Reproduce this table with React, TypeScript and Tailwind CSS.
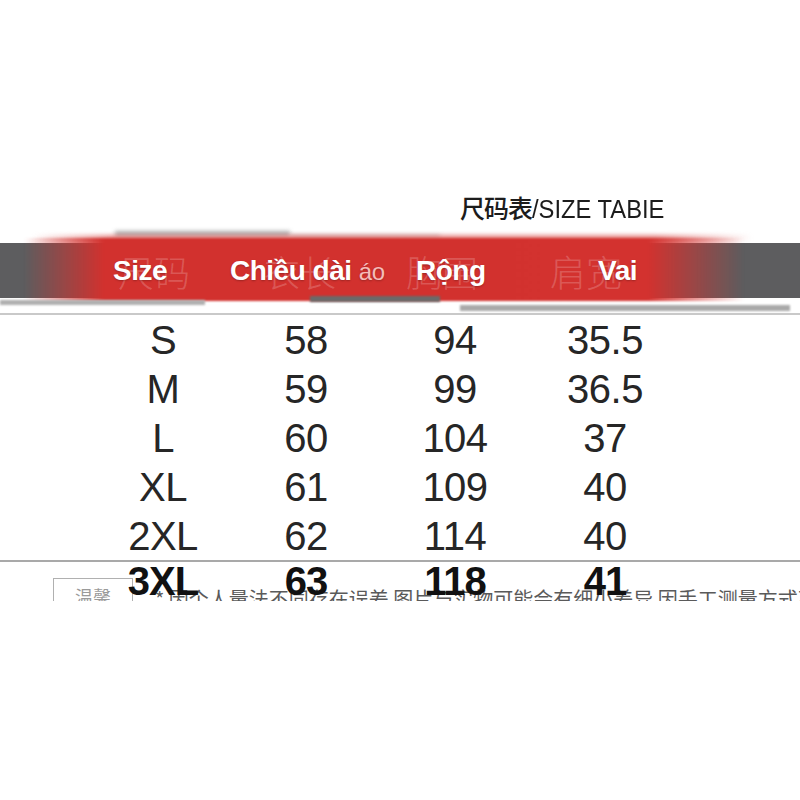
// Size chart — product size table with red brush header band

const ROWS = [
  { size: "S", len: "58", chest: "94", shoulder: "35.5" },
  { size: "M", len: "59", chest: "99", shoulder: "36.5" },
  { size: "L", len: "60", chest: "104", shoulder: "37" },
  { size: "XL", len: "61", chest: "109", shoulder: "40" },
  { size: "2XL", len: "62", chest: "114", shoulder: "40" },
];

const LAST = { size: "3XL", len: "63", chest: "118", shoulder: "41" };

const SANS = "font-['Liberation_Sans','Noto_Sans_CJK_SC',sans-serif]";
const CJK = "font-['Noto_Sans_CJK_SC','Liberation_Sans',sans-serif]";

export default function App() {
  return (
    <div className={`w-[800px] h-[800px] bg-white overflow-hidden ${SANS}`}>
      {/* Title */}
      <div className="pt-[191px] pl-[460px] h-[228px]">
        <p className="text-[25px] leading-[32px] text-[#1c1c1c] whitespace-nowrap">
          <span className={`${CJK} font-medium tracking-[-1px]`}>尺码表</span>
          <span className="inline-block origin-left scale-x-[0.95]">/SIZE TABIE</span>
        </p>
      </div>

      <HeaderBand />

      {/* Body rows */}
      <div className="grid grid-cols-[150px_136px_162px_138px] pl-[88px] text-[40px] text-[#262626]">
        {ROWS.map((r) => (
          <Row key={r.size} cells={[r.size, r.len, r.chest, r.shoulder]} />
        ))}
      </div>
      <div className="h-[2px] bg-[#a9a9a9] -mt-[1px]" />

      {/* Bottom: last row over the cut-off note */}
      <div className="relative h-[39px] overflow-hidden">
        <div className="flex items-start pt-[16px] pl-[53px] gap-[22px]">
          <div className={`shrink-0 w-[80px] h-[34px] border border-[#b0b0b0] flex justify-center pt-[7px] text-[18px] leading-[20px] text-[#9a9a9a] ${CJK}`}>
            温馨
          </div>
          <p className={`pt-[10px] text-[20px] leading-[22px] text-[#5a5a5a] whitespace-nowrap ${CJK}`}>
            * 因个人量法不同存在误差 图片与实物可能会有细小差异 因手工测量方式不同
          </p>
        </div>
        <div className="absolute inset-x-0 top-0 grid grid-cols-[150px_136px_162px_138px] pl-[88px] text-[40px] font-bold text-[#111]">
          {[LAST.size, LAST.len, LAST.chest, LAST.shoulder].map((c, i) => (
            <div key={i} className="h-[38px] leading-[38px] text-center tracking-[-1px]">
              {c}
            </div>
          ))}
        </div>
      </div>
    </div>
  );
}

function Row({ cells }: { cells: string[] }) {
  return (
    <>
      {cells.map((c, i) => (
        <div key={i} className="h-[49px] leading-[49px] text-center tracking-[-0.5px]">
          {c}
        </div>
      ))}
    </>
  );
}

function HeaderBand() {
  return (
    <div className="relative h-[88px]">
      {/* shadow strips above */}
      <div className="absolute left-[115px] w-[175px] top-[3px] h-[8px] bg-[#9a9a9a] blur-[2px] opacity-80" />
      <div className="absolute left-[290px] w-[150px] top-[7px] h-[5px] bg-[#c4c4c4] blur-[2px]" />

      {/* gray bar */}
      <div className="absolute inset-x-0 top-[15px] h-[55px] bg-[#5d5d5f]" />

      {/* red brush stroke */}
      <div className="absolute inset-x-0 top-[7px] h-[6px] blur-[2px] bg-[linear-gradient(to_right,transparent_4%,#e58a88_14%,#e58a88_82%,transparent_94%)]" />
      <div className="absolute inset-x-0 top-[10px] h-[63px] blur-[1px] bg-[linear-gradient(to_right,transparent_3%,#d2312e_13%,#d3322f_81%,transparent_93%)]" />

      {/* shadow strips below */}
      <div className="absolute left-0 w-[205px] top-[72px] h-[5px] bg-[#b0b0b0] blur-[1px]" />
      <div className="absolute left-[310px] w-[130px] top-[68px] h-[6px] bg-[#6a6a6a] blur-[1px]" />
      <div className="absolute left-[460px] w-[330px] top-[77px] h-[6px] bg-[#a9a9a9] blur-[1px]" />
      <div className="absolute inset-x-0 top-[85px] h-[2px] bg-[#c9c9c9]" />

      {/* faint chinese labels underneath */}
      <div className={`absolute inset-x-0 top-[15px] h-[55px] flex items-center text-[36px] leading-none text-white/20 font-light ${CJK}`}>
        <span className="ml-[118px]">尺码</span>
        <span className="ml-[74px]">衣长</span>
        <span className="ml-[70px]">胸围</span>
        <span className="ml-[72px]">肩宽</span>
      </div>

      {/* header labels */}
      <div className="absolute inset-x-0 top-[15px] h-[55px] flex items-center text-white font-bold text-[28px] leading-none tracking-[-0.5px] [text-shadow:0_1px_2px_rgba(0,0,0,0.25)]">
        <span className="ml-[113px] w-[117px]">Size</span>
        <span className="w-[186px]">
          Chiều dài <span className="text-[24px] font-normal text-[#f4bcb9]">áo</span>
        </span>
        <span className="w-[182px]">Rộng</span>
        <span>Vai</span>
      </div>
    </div>
  );
}
